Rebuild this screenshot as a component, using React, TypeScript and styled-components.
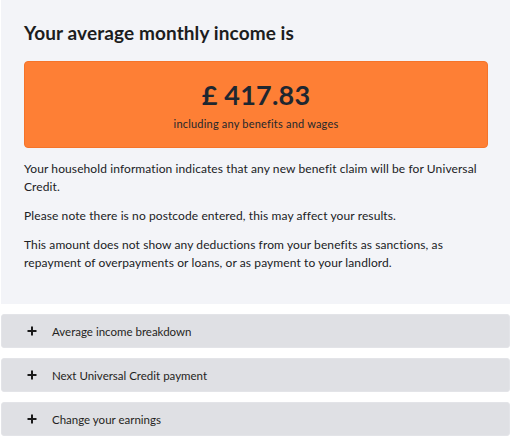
import React, { FC } from "react";
import styled, { createGlobalStyle } from "styled-components";

const GlobalStyle = createGlobalStyle`
  html, body {
    margin: 0;
    padding: 0;
    background: #ffffff;
  }
  body {
    font-family: Lato, "Liberation Sans", sans-serif;
    color: #1f1f22;
  }
`;

const Page = styled.div`
  width: 512px;
  padding: 0 2px 0 1px;
  box-sizing: border-box;
`;

const Summary = styled.section`
  background: #f3f4f8;
  padding: 20px 22px 32px 23px;
`;

const Title = styled.h2`
  margin: 0 0 15px;
  font-size: 19px;
  line-height: 26px;
  font-weight: 700;
  letter-spacing: 0.1px;
  color: #1c1d20;
`;

const IncomeBox = styled.div`
  background: #fe7f35;
  border: 1px solid #f5742a;
  border-radius: 4px;
  height: 87px;
  box-sizing: border-box;
  display: flex;
  flex-direction: column;
  align-items: center;
  justify-content: center;
  margin-bottom: 12px;
`;

const Amount = styled.div`
  font-size: 27px;
  line-height: 34px;
  font-weight: 700;
  letter-spacing: 0.2px;
  color: #1e2730;
`;

const AmountNote = styled.div`
  font-size: 11px;
  line-height: 16px;
  color: #24272c;
  margin-top: 4px;
  letter-spacing: 0.2px;
`;

const Para = styled.p`
  margin: 0 0 11px;
  font-size: 12px;
  line-height: 18px;
  letter-spacing: 0.1px;
  color: #202124;
  &:last-child {
    margin-bottom: 0;
  }
`;

const AccordionList = styled.div`
  display: flex;
  flex-direction: column;
  gap: 10px;
  margin-top: 10px;
`;

const AccordionHeader = styled.button`
  display: flex;
  align-items: center;
  gap: 14px;
  height: 34px;
  padding: 0 0 0 24px;
  background: #dfe0e4;
  border: 1px solid #e3e4e8;
  border-radius: 3px;
  font-family: inherit;
  font-size: 11.5px;
  color: #1f1f22;
  text-align: left;
  cursor: pointer;
`;

const PlusIcon = styled.svg`
  width: 12px;
  height: 12px;
  flex-shrink: 0;
`;

const Plus: FC = () => (
  <PlusIcon viewBox="0 0 12 12">
    <path d="M6 1.5v9M1.5 6h9" stroke="#1a1a1a" strokeWidth="2" />
  </PlusIcon>
);

const sections = [
  "Average income breakdown",
  "Next Universal Credit payment",
  "Change your earnings",
];

const App: FC = () => (
  <>
    <GlobalStyle />
    <Page>
      <Summary>
        <Title>Your average monthly income is</Title>
        <IncomeBox>
          <Amount>£ 417.83</Amount>
          <AmountNote>including any benefits and wages</AmountNote>
        </IncomeBox>
        <Para>
          Your household information indicates that any new benefit claim will
          be for Universal Credit.
        </Para>
        <Para>
          Please note there is no postcode entered, this may affect your
          results.
        </Para>
        <Para>
          This amount does not show any deductions from your benefits as
          sanctions, as repayment of overpayments or loans, or as payment to
          your landlord.
        </Para>
      </Summary>
      <AccordionList>
        {sections.map((s) => (
          <AccordionHeader key={s}>
            <Plus />
            {s}
          </AccordionHeader>
        ))}
      </AccordionList>
    </Page>
  </>
);

export default App;
